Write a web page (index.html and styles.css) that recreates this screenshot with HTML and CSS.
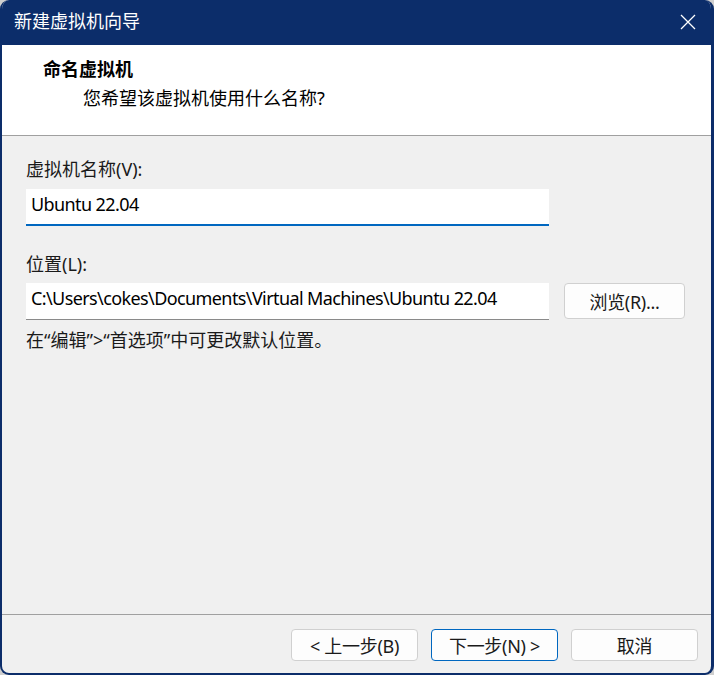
FILE: index.html
```html
<!DOCTYPE html>
<html lang="zh-CN">
<head>
  <meta charset="UTF-8">
  <meta name="viewport" content="width=device-width, initial-scale=1">
  <title>新建虚拟机向导</title>
  <link rel="stylesheet" href="styles.css">
</head>
<body>

<div class="window">
  <div class="titlebar">
    <span class="title">新建虚拟机向导</span>
    <button class="close" aria-label="关闭">
      <svg width="16" height="16" viewBox="0 0 16 16">
        <path d="M1 1 L15 15 M15 1 L1 15" stroke="#fff" stroke-width="1.3" fill="none"/>
      </svg>
    </button>
  </div>

  <div class="head">
    <div class="head-title">命名虚拟机</div>
    <div class="head-sub">您希望该虚拟机使用什么名称?</div>
  </div>

  <div class="content">
    <div class="label">虚拟机名称(V):</div>
    <div class="field focused">Ubuntu 22.04</div>

    <div class="label second">位置(L):</div>
    <div class="row">
      <div class="field">C:\Users\cokes\Documents\Virtual Machines\Ubuntu 22.04</div>
      <button class="btn browse">浏览(R)...</button>
    </div>

    <p class="hint">在“编辑”&gt;“首选项”中可更改默认位置。</p>
  </div>

  <div class="footer">
    <button class="btn">&lt; 上一步(B)</button>
    <button class="btn primary">下一步(N) &gt;</button>
    <button class="btn">取消</button>
  </div>
</div>

</body>
</html>
```

FILE: styles.css
```css
body {
  margin: 0;
  padding: 0;
  background-color: #cfcfcf;
  font-family: "Noto Sans", "Noto Sans CJK SC", sans-serif;
  font-size: 18px;
  color: #000;
}
.window {
  box-sizing: border-box;
  width: 714px;
  height: 675px;
  display: flex;
  flex-direction: column;
  background: #f0f0f0;
  border: solid #0c2d6a;
  border-width: 0 3px 2px 2px;
  border-radius: 9px;
  overflow: hidden;
}
.titlebar {
  height: 45px;
  flex: none;
  display: flex;
  align-items: center;
  justify-content: space-between;
  background: #0c2d6a;
  color: white;
  padding-left: 12px;
}
.title {
  line-height: 24px;
  margin-top: -3px;
}
.close {
  width: 46px;
  height: 45px;
  border: none;
  background: none;
  display: flex;
  align-items: center;
  justify-content: center;
  padding: 0;
  margin-top: -2px;
}
.head {
  flex: none;
  background: white;
  border-bottom: 1px solid #a0a0a0;
  padding: 12px 0 0 41px;
  height: 91px;
  box-sizing: border-box;
}
.head-title {
  font-weight: bold;
  line-height: 24px;
}
.head-sub {
  line-height: 24px;
  margin-top: 5px;
  padding-left: 40px;
}
.content {
  flex: 1;
  padding: 21px 0 0 24px;
}
.label {
  line-height: 24px;
  color: #1a1a1a;
}
.label.second {
  margin-top: 26px;
}
.field {
  box-sizing: border-box;
  width: 523px;
  height: 37px;
  margin-top: 8px;
  background: white;
  border-bottom: 1px solid #8a8a8a;
  padding: 3px 5px 0;
  line-height: 24px;
  letter-spacing: -0.6px;
  white-space: nowrap;
  overflow: hidden;
}
.field.focused {
  border-bottom: 2px solid #0067c0;
}
.row {
  display: flex;
  align-items: flex-start;
  gap: 15px;
  margin-top: 7px;
}
.row .field {
  margin-top: 0;
}
.btn {
  box-sizing: border-box;
  width: 127px;
  height: 32px;
  background: #fdfdfd;
  border: 1px solid #d0d0d0;
  border-radius: 4px;
  font-family: inherit;
  font-size: 18px;
  letter-spacing: -0.3px;
  color: #1a1a1a;
  padding: 0;
}
.btn.browse {
  width: 121px;
  height: 36px;
}
.btn.primary {
  border-color: #0067c0;
}
.hint {
  margin: 8px 0 0;
  line-height: 24px;
  color: #1a1a1a;
}
.footer {
  flex: none;
  height: 59px;
  box-sizing: border-box;
  border-top: 1px solid #a0a0a0;
  display: flex;
  justify-content: flex-end;
  align-items: flex-start;
  gap: 13px;
  padding: 14px 13px 0 0;
}
```
